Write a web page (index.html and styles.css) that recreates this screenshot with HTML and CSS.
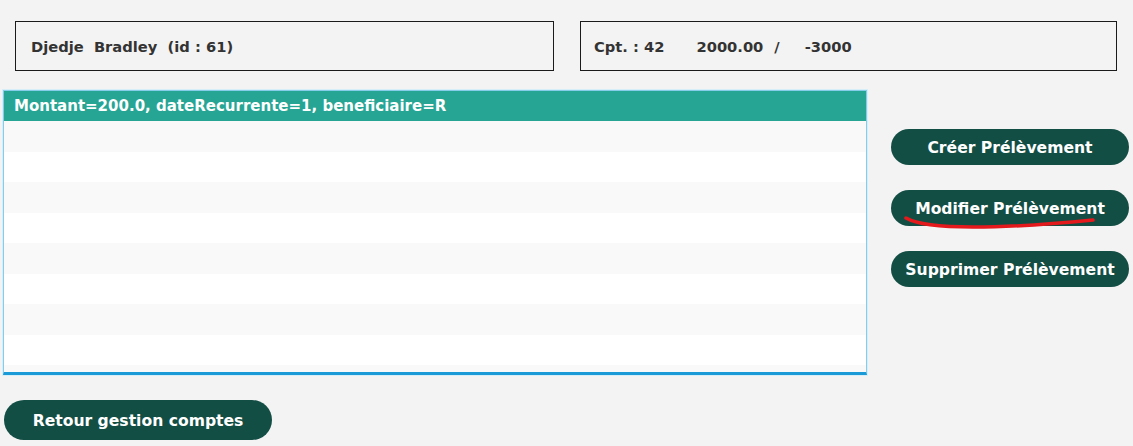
FILE: index.html
```html
<!DOCTYPE html>
<html lang="fr">
<head>
<meta charset="utf-8">
<link rel="stylesheet" href="styles.css">
</head>
<body>
<div class="page">
  <div class="top">
    <div class="box box-client">Djedje&nbsp; Bradley&nbsp; (id : 61)</div>
    <div class="box box-compte">
      <span class="cpt">Cpt. : 42</span>
      <span class="solde">2000.00</span>
      <span class="sep">/</span>
      <span class="decouvert">-3000</span>
    </div>
  </div>
  <div class="main">
    <div class="list">
      <div class="cell selected">Montant=200.0, dateRecurrente=1, beneficiaire=R</div>
      <div class="cell odd"></div>
      <div class="cell"></div>
      <div class="cell odd"></div>
      <div class="cell"></div>
      <div class="cell odd"></div>
      <div class="cell"></div>
      <div class="cell odd"></div>
      <div class="cell"></div>
      <div class="cell odd"></div>
    </div>
    <div class="actions">
      <button class="btn btn-side">Créer Prélèvement</button>
      <div class="marked">
        <button class="btn btn-side">Modifier Prélèvement</button>
        <svg class="scribble" width="200" height="18" viewBox="0 0 200 18"><path d="M3 4 C 15 11, 40 13, 70 13 C 110 13, 150 10, 190 6" fill="none" stroke="#e3191c" stroke-width="3.5" stroke-linecap="round"/></svg>
      </div>
      <button class="btn btn-side">Supprimer Prélèvement</button>
    </div>
  </div>
  <div class="bottom">
    <button class="btn btn-back">Retour gestion comptes</button>
  </div>
</div>
</body>
</html>
```

FILE: styles.css
```css
html, body {
  margin: 0;
  padding: 0;
  background: #f3f3f3;
}
body {
  font-family: "DejaVu Sans", "Open Sans", sans-serif;
  font-weight: bold;
  color: #333333;
}
.page {
  width: 1133px;
  height: 446px;
  overflow: hidden;
}
.top {
  display: flex;
  padding: 21px 0 0 15px;
  gap: 26px;
}
.box {
  box-sizing: border-box;
  height: 50px;
  border: 1px solid #1a1a1a;
  display: flex;
  align-items: center;
  font-size: 14.7px;
  padding-top: 1px;
  white-space: pre;
}
.box-client { width: 539px; padding-left: 15px; }
.box-compte { width: 537px; padding-left: 13px; }
.solde { margin-left: 32px; }
.sep { margin-left: 11px; }
.decouvert { margin-left: 25px; }
.main {
  display: flex;
  padding: 19px 0 0 3px;
}
.list {
  box-sizing: border-box;
  width: 864px;
  height: 285px;
  border: 1px solid #86cde9;
  border-bottom: 3px solid #1a9ad6;
  box-shadow: 0 0 0 1px #d5eef8;
  overflow: hidden;
  background: #ffffff;
}
.cell {
  height: 30.5px;
  background: #ffffff;
}
.cell.odd { background: #f9f9f9; }
.cell.selected {
  height: 30px;
  background: #26a594;
  color: #ffffff;
  font-size: 15px;
  line-height: 31px;
  padding-left: 10px;
}
.actions {
  display: flex;
  flex-direction: column;
  gap: 25px;
  padding: 39px 0 0 24px;
}
.btn {
  font-family: inherit;
  font-weight: bold;
  color: #ffffff;
  background: #134e45;
  border: none;
  padding: 1px 0 0;
  margin: 0;
}
.btn-side {
  width: 238px;
  height: 36px;
  border-radius: 18px;
  font-size: 15.6px;
}
.marked { position: relative; }
.scribble {
  position: absolute;
  left: 12px;
  top: 24px;
}
.bottom {
  padding: 25px 0 0 4px;
}
.btn-back {
  width: 268px;
  height: 40px;
  border-radius: 20px;
  font-size: 15.6px;
}
```
